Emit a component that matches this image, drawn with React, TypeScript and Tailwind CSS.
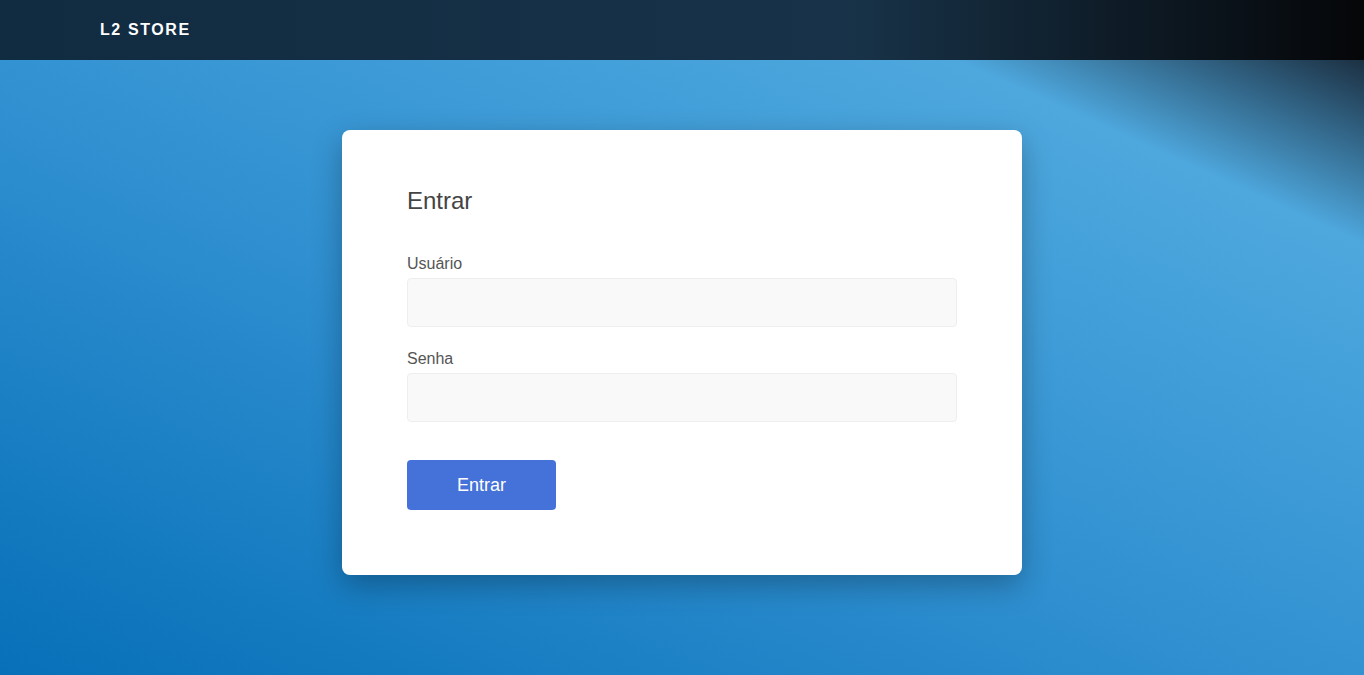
import React from "react";

const LoginPage = () => {
  return (
    <div className="min-h-screen flex flex-col font-['Liberation_Sans',Arial,sans-serif]">
      {/* Header */}
      <header className="h-[60px] shrink-0 bg-[linear-gradient(to_right,#112b41_0%,#183349_62%,#050608_100%)]">
        <div className="px-[100px] h-full flex items-center">
          <span className="text-white font-bold text-base tracking-widest">L2 STORE</span>
        </div>
      </header>

      {/* Main */}
      <main className="flex-1 bg-[linear-gradient(to_top_right,#0770b8_0%,#2f8fd0_45%,#4ea8de_85%,#1c3042_100%)] pt-[70px] pb-[100px]">
        <div className="w-[680px] mx-auto bg-white rounded-lg shadow-[0_10px_30px_rgba(0,0,0,0.28)] px-[65px] pt-[55px] pb-[65px]">
          <h2 className="text-2xl leading-8 text-[#444]">Entrar</h2>

          <form className="mt-[35px] flex flex-col" onSubmit={(e) => e.preventDefault()}>
            <label className="text-base leading-6 text-[#555] mb-[2px]">Usuário</label>
            <input
              type="text"
              className="h-[49px] bg-[#f9f9f9] border border-[#eeeeee] rounded px-3 outline-none"
            />

            <label className="text-base leading-6 text-[#555] mt-[20px] mb-[2px]">Senha</label>
            <input
              type="password"
              className="h-[49px] bg-[#f9f9f9] border border-[#eeeeee] rounded px-3 outline-none"
            />

            <div className="mt-[38px]">
              <button
                type="submit"
                className="w-[149px] h-[50px] bg-[#4472d8] text-white text-lg rounded"
              >
                Entrar
              </button>
            </div>
          </form>
        </div>
      </main>
    </div>
  );
};

export default function App() {
  return <LoginPage />;
}
